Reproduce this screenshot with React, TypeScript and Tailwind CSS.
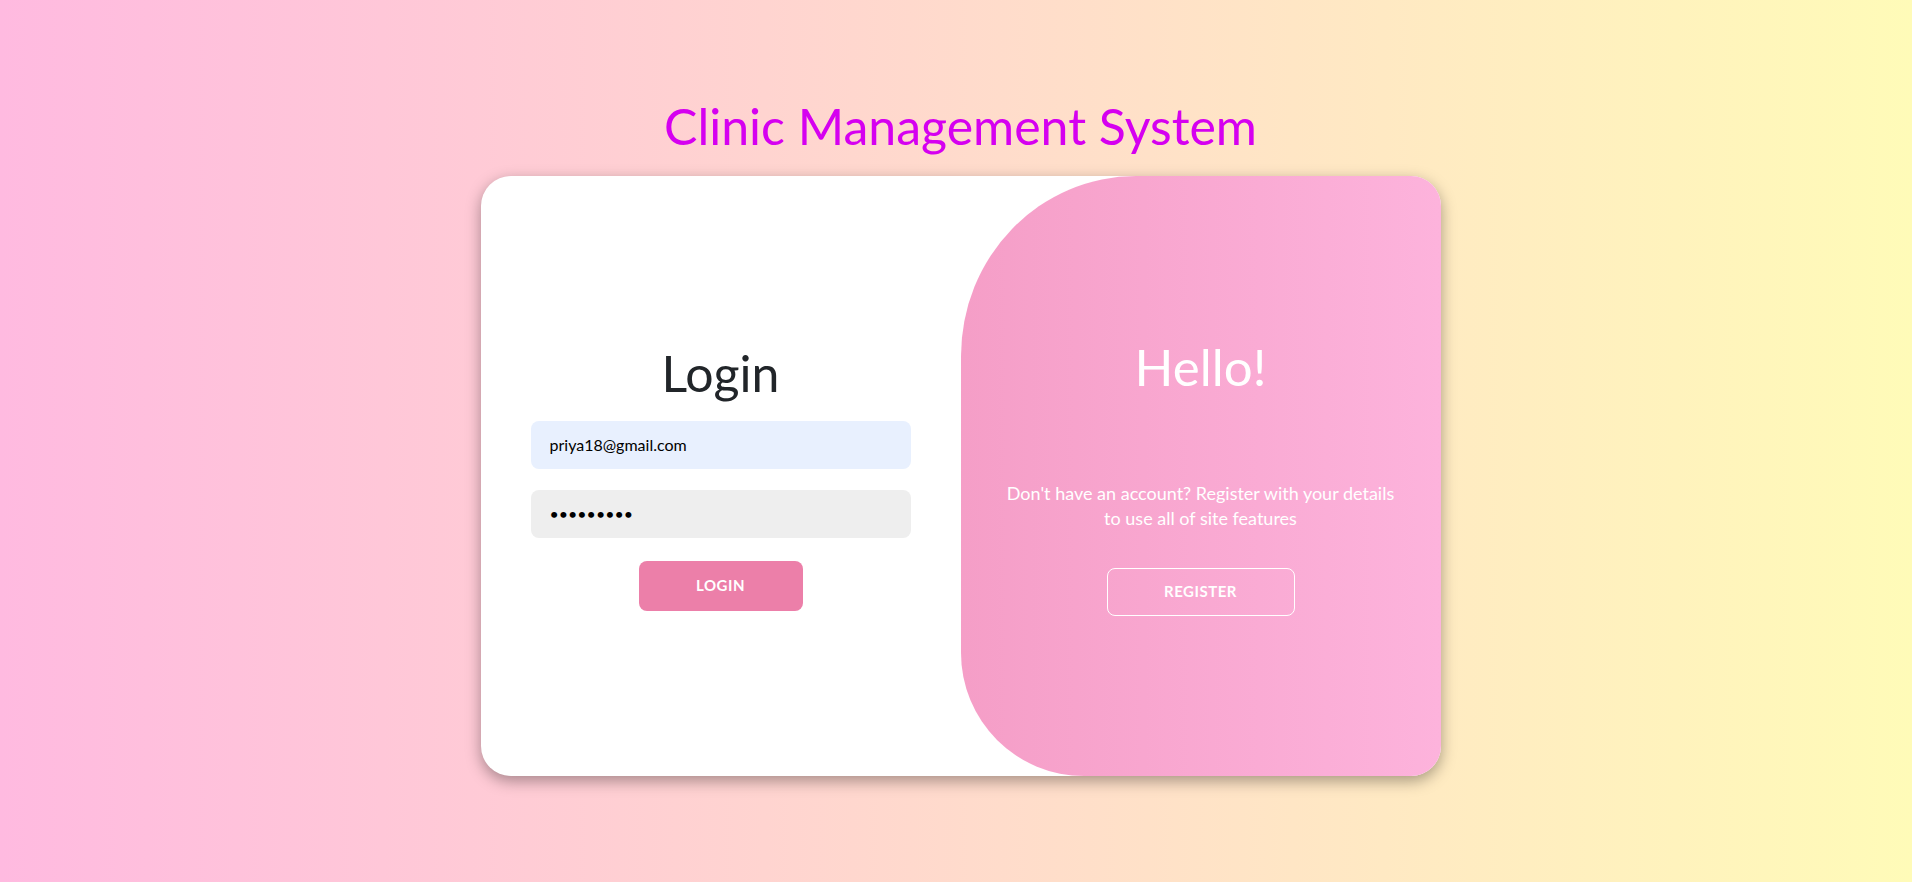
export default function App() {
  return (
    <div className="min-h-screen w-full pl-[9px] bg-[linear-gradient(to_right,#ffbae0,#fffbb8)] flex flex-col items-center font-['Lato',sans-serif]">
      <h1 className="mt-[96px] mb-[20px] text-[50px] leading-[60px] text-[#d500f0]">Clinic Management System</h1>

      <div className="w-[960px] h-[600px] bg-white rounded-[30px] overflow-hidden shadow-[0_5px_15px_rgba(0,0,0,0.35)] flex">
        {/* login side */}
        <div className="w-1/2 flex flex-col items-center justify-center px-[50px]">
          <h2 className="text-[50px] leading-[62px] text-[#212529]">Login</h2>
          <form className="w-full flex flex-col items-center mt-[17px]" onSubmit={(e) => e.preventDefault()}>
            <input
              type="email"
              defaultValue="priya18@gmail.com"
              className="w-full h-12 rounded-lg bg-[#e8f0fe] px-[19px] text-[16px] text-black outline-none"
            />
            <input
              type="password"
              defaultValue="priya1234"
              className="w-full h-12 mt-[21px] rounded-lg bg-[#eeeeee] px-[19px] text-[16px] text-black outline-none"
            />
            <button className="mt-[23px] w-[164px] h-[50px] rounded-lg bg-[#ec7fa9] text-white text-[15px] font-bold uppercase tracking-[0.5px]">
              Login
            </button>
          </form>
        </div>

        {/* register side */}
        <div className="w-1/2 rounded-tl-[175px_180px] rounded-bl-[123px] bg-[linear-gradient(to_right,#f59ec7,#fdb3dc)] flex flex-col items-center justify-center px-[40px] text-white text-center">
          <h2 className="text-[51px] leading-[60px]">Hello!</h2>
          <p className="mt-[84px] text-[18px] leading-[25px]">
            Don't have an account? Register with your details to use all of site features
          </p>
          <button className="mt-[37px] w-[188px] h-[48px] rounded-lg border border-white text-[15px] font-bold uppercase tracking-[0.5px]">
            Register
          </button>
        </div>
      </div>
    </div>
  );
}
